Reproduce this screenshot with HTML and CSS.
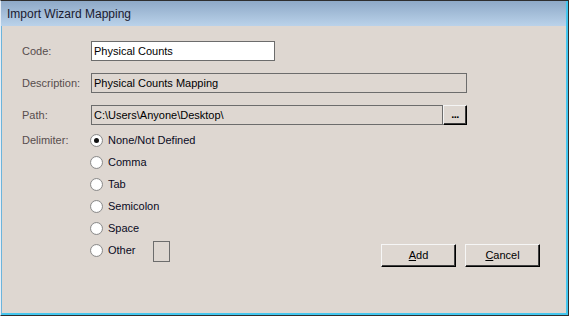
FILE: index.html
```html
<!DOCTYPE html>
<html>
<head>
<meta charset="utf-8">
<link rel="stylesheet" href="styles.css">
</head>
<body>
<div class="window">
  <div class="frame">
    <div class="titlebar">Import Wizard Mapping</div>
    <div class="content">
      <div class="row">
        <div class="label">Code:</div>
        <div class="field field-code">Physical Counts</div>
      </div>
      <div class="row">
        <div class="label">Description:</div>
        <div class="field field-desc">Physical Counts Mapping</div>
      </div>
      <div class="row">
        <div class="label">Path:</div>
        <div class="field field-path">C:\Users\Anyone\Desktop\</div>
        <div class="browse">...</div>
      </div>
      <div class="delim">
        <div class="label label-delim">Delimiter:</div>
        <div class="radios">
          <div class="radio-row"><span class="radio checked"></span><span class="rtext">None/Not Defined</span></div>
          <div class="radio-row"><span class="radio"></span><span class="rtext">Comma</span></div>
          <div class="radio-row"><span class="radio"></span><span class="rtext">Tab</span></div>
          <div class="radio-row"><span class="radio"></span><span class="rtext">Semicolon</span></div>
          <div class="radio-row"><span class="radio"></span><span class="rtext">Space</span></div>
          <div class="radio-row"><span class="radio"></span><span class="rtext">Other</span><span class="other-box"></span></div>
        </div>
        <div class="buttons">
          <div class="btn"><u>A</u>dd</div>
          <div class="btn"><u>C</u>ancel</div>
        </div>
      </div>
    </div>
  </div>
</div>
</body>
</html>
```

FILE: styles.css
```css
html, body {
  margin: 0;
  padding: 0;
}
body {
  width: 569px;
  height: 316px;
  overflow: hidden;
  font-family: "Liberation Sans", Arial, sans-serif;
  font-size: 11px;
}
.window {
  box-sizing: border-box;
  width: 569px;
  height: 316px;
  border: 1px solid #2e2e2e;
  border-left-color: #e6eef6;
  display: flex;
}
.frame {
  flex: 1;
  display: flex;
  flex-direction: column;
  border-left: 1px solid #6cb4dc;
  border-right: 2px solid #44c6ee;
  border-bottom: 2px solid #44c6ee;
  background: #ded7d1;
}
.titlebar {
  height: 25px;
  line-height: 26px;
  padding-left: 6px;
  font-size: 12px;
  color: #1a1a30;
  background: linear-gradient(to bottom, #8ea9c7, #bad2ea);
  margin-left: -1px;
}
.content {
  flex: 1;
  padding: 15px 26px 0 20px;
  display: flex;
  flex-direction: column;
}
.row {
  display: flex;
  align-items: center;
  height: 20px;
  margin-bottom: 12px;
}
.label {
  width: 69px;
  color: #574d4d;
  flex: none;
}
.field {
  box-sizing: border-box;
  height: 20px;
  line-height: 18px;
  border: 1px solid #6c6c6c;
  padding-left: 2px;
  color: #000;
  white-space: nowrap;
}
.field-code {
  width: 184px;
  background: #fff;
}
.field-desc {
  width: 376px;
}
.field-path {
  width: 352px;
}
.browse {
  box-sizing: border-box;
  width: 24px;
  height: 20px;
  border: 1px solid;
  border-color: #f4f4f4 #000 #000 #f4f4f4;
  box-shadow: inset -1px -1px 0 #3c3c3c;
  text-align: center;
  line-height: 16px;
  font-weight: bold;
  color: #000;
  letter-spacing: -0.5px;
}
.delim {
  display: flex;
  margin-top: -8px;
}
.label-delim {
  width: 68px;
  line-height: 22px;
}
.radios {
  display: flex;
  flex-direction: column;
  padding-bottom: 6px;
}
.radio-row {
  display: flex;
  align-items: center;
  height: 22px;
}
.radio {
  box-sizing: border-box;
  width: 13px;
  height: 13px;
  border-radius: 50%;
  border: 1px solid #8c8c8c;
  background: radial-gradient(circle at 50% 50%, #ffffff 55%, #e2e2e2 100%);
  margin-right: 5px;
  position: relative;
  flex: none;
}
.radio.checked::after {
  content: "";
  position: absolute;
  left: 3px;
  top: 3px;
  width: 5px;
  height: 5px;
  border-radius: 50%;
  background: #111;
}
.rtext {
  color: #0a0a1e;
}
.other-box {
  box-sizing: border-box;
  width: 17px;
  height: 21px;
  border: 1px solid #6c6c6c;
  margin-left: 17px;
  margin-top: 2px;
}
.buttons {
  margin-left: auto;
  align-self: flex-end;
  display: flex;
  gap: 9px;
}
.btn {
  box-sizing: border-box;
  width: 75px;
  height: 23px;
  border: 1px solid;
  border-color: #f6f6f6 #000 #000 #f6f6f6;
  box-shadow: inset -1px -1px 0 #404040;
  text-align: center;
  line-height: 20px;
  color: #000;
}
.btn u {
  text-decoration: underline;
}
```
